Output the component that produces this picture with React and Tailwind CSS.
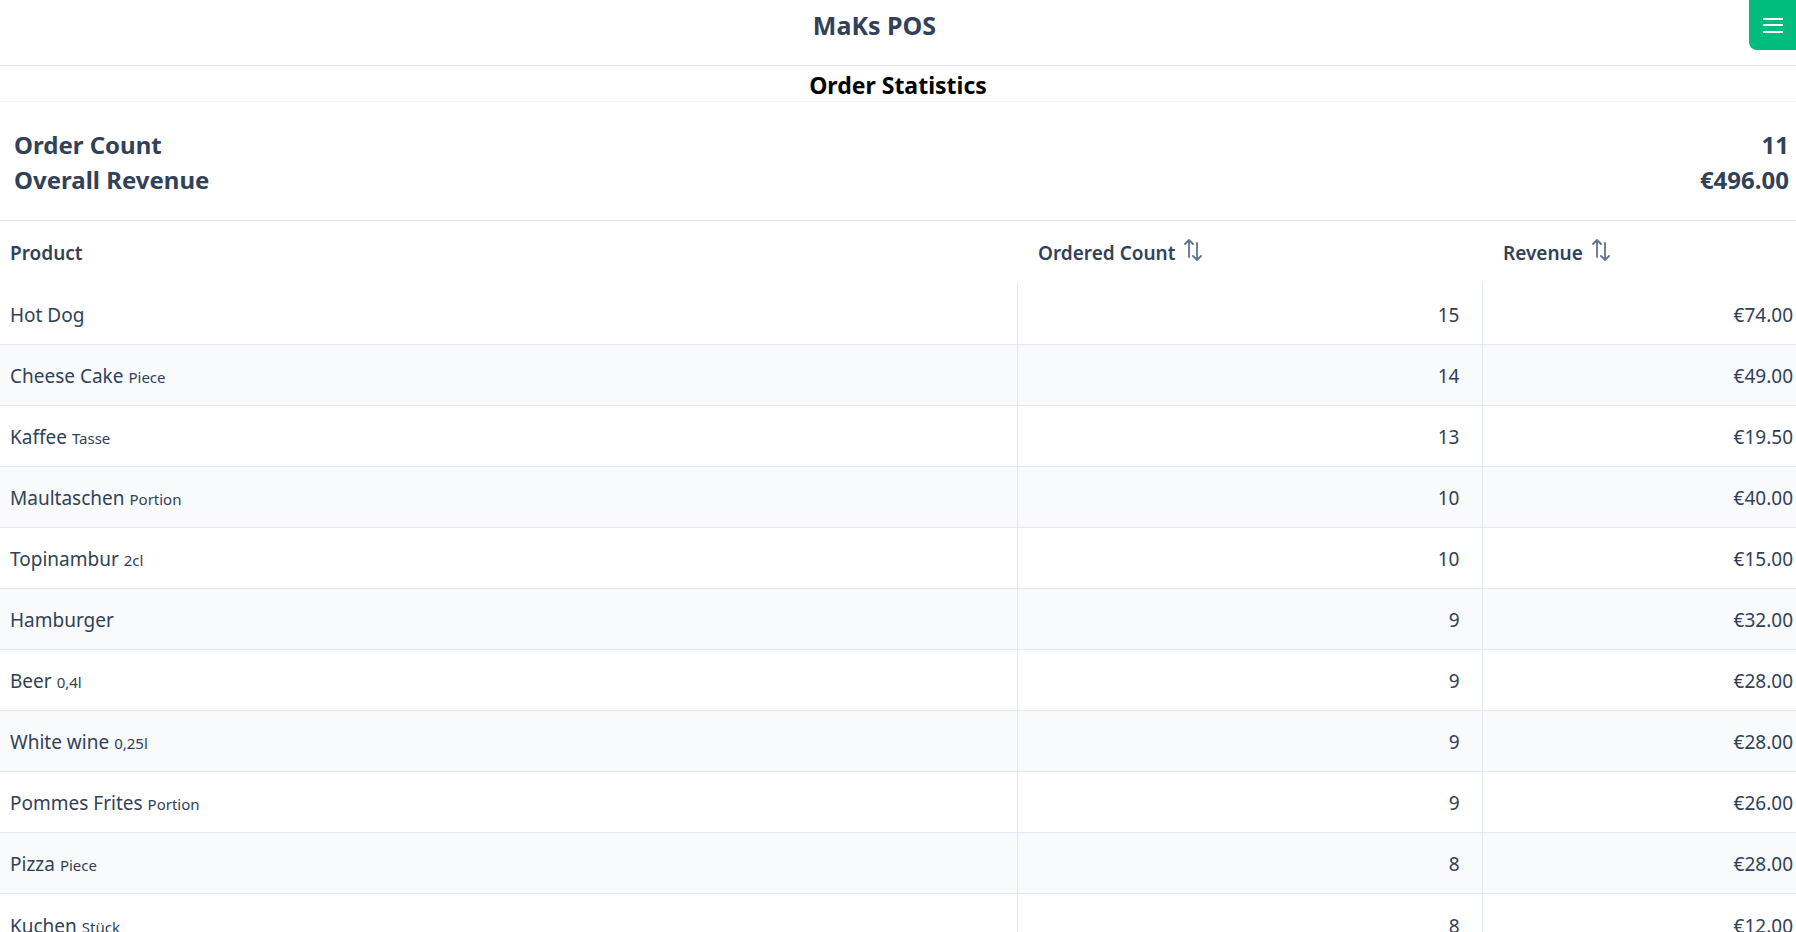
import React from "react";

const rows = [
  { name: "Hot Dog", unit: "", count: 15, revenue: "€74.00" },
  { name: "Cheese Cake", unit: "Piece", count: 14, revenue: "€49.00" },
  { name: "Kaffee", unit: "Tasse", count: 13, revenue: "€19.50" },
  { name: "Maultaschen", unit: "Portion", count: 10, revenue: "€40.00" },
  { name: "Topinambur", unit: "2cl", count: 10, revenue: "€15.00" },
  { name: "Hamburger", unit: "", count: 9, revenue: "€32.00" },
  { name: "Beer", unit: "0,4l", count: 9, revenue: "€28.00" },
  { name: "White wine", unit: "0,25l", count: 9, revenue: "€28.00" },
  { name: "Pommes Frites", unit: "Portion", count: 9, revenue: "€26.00" },
  { name: "Pizza", unit: "Piece", count: 8, revenue: "€28.00" },
  { name: "Kuchen", unit: "Stück", count: 8, revenue: "€12.00" },
];

function SortIcon() {
  return (
    <svg
      viewBox="0 0 20 24"
      fill="none"
      stroke="currentColor"
      strokeWidth={1.8}
      strokeLinecap="round"
      strokeLinejoin="round"
      className="w-[20px] h-[24px] text-slate-500"
    >
      <path d="M6 2v17M2 6l4-4 4 4" />
      <path d="M14 5v17M10 18l4 4 4-4" />
    </svg>
  );
}

export default function App() {
  return (
    <div className="min-h-screen bg-white text-slate-700 font-['Noto_Sans',sans-serif]">
      {/* top bar */}
      <header className="flex items-start h-[66px] border-b border-gray-200">
        <div className="flex-1 h-[52px] flex items-center justify-center">
          <h1 className="text-[25px] font-bold text-slate-700">MaKs POS</h1>
        </div>
        <button className="w-[47px] h-[50px] bg-emerald-500 rounded-bl-lg flex flex-col items-center justify-center gap-[4.5px]">
          <span className="block w-[20px] h-[2px] bg-white" />
          <span className="block w-[20px] h-[2px] bg-white" />
          <span className="block w-[20px] h-[2px] bg-white" />
        </button>
      </header>

      <div className="h-[36px] pt-[4px] flex items-center justify-center border-b border-gray-100">
        <h2 className="text-[23px] font-bold text-black">Order Statistics</h2>
      </div>

      {/* summary */}
      <div className="pt-[25px] pb-[23px] pl-[14px] pr-[7px] border-b border-slate-200 text-[24px] font-bold leading-[35px] text-slate-700">
        <div className="flex justify-between">
          <span>Order Count</span>
          <span>11</span>
        </div>
        <div className="flex justify-between">
          <span>Overall Revenue</span>
          <span>€496.00</span>
        </div>
      </div>

      {/* product table */}
      <table className="w-full table-fixed border-collapse text-[19px]">
        <colgroup>
          <col className="w-[1017px]" />
          <col className="w-[465px]" />
          <col />
        </colgroup>
        <thead>
          <tr className="h-[62px] text-left text-slate-700">
            <th className="pl-[10px] pt-[2px] font-semibold">Product</th>
            <th className="pl-[21px] pt-[2px] font-semibold">
              <span className="inline-flex items-center gap-[8px]">
                Ordered Count
                <span className="-mt-[6px]">
                  <SortIcon />
                </span>
              </span>
            </th>
            <th className="pl-[21px] pt-[2px] font-semibold">
              <span className="inline-flex items-center gap-[8px]">
                Revenue
                <span className="-mt-[6px]">
                  <SortIcon />
                </span>
              </span>
            </th>
          </tr>
        </thead>
        <tbody className="divide-y divide-slate-200">
          {rows.map((r, i) => (
            <tr key={i} className={`h-[61px] ${i % 2 === 1 ? "bg-slate-50" : "bg-white"}`}>
              <td className="pl-[10px] pt-[4px]">
                {r.name}
                {r.unit && <span className="text-[15px] ml-[5px]">{r.unit}</span>}
              </td>
              <td className="pr-[22px] pt-[4px] text-right border-l border-slate-200">{r.count}</td>
              <td className="pr-[3px] pt-[4px] text-right border-l border-slate-200">{r.revenue}</td>
            </tr>
          ))}
        </tbody>
      </table>
    </div>
  );
}
